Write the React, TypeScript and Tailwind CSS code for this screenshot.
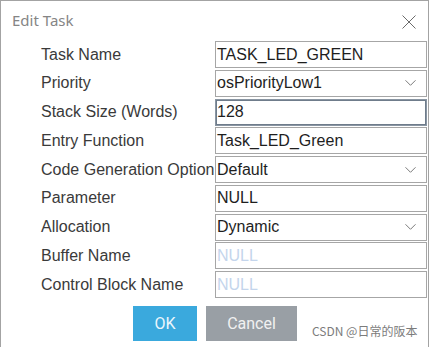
type Row = {
  label: string
  value: string
  select?: boolean
  focused?: boolean
  placeholder?: boolean
}

const rows: Row[] = [
  { label: 'Task Name', value: 'TASK_LED_GREEN' },
  { label: 'Priority', value: 'osPriorityLow1', select: true },
  { label: 'Stack Size (Words)', value: '128', focused: true },
  { label: 'Entry Function', value: 'Task_LED_Green' },
  { label: 'Code Generation Option', value: 'Default', select: true },
  { label: 'Parameter', value: 'NULL' },
  { label: 'Allocation', value: 'Dynamic', select: true },
  { label: 'Buffer Name', value: 'NULL', placeholder: true },
  { label: 'Control Block Name', value: 'NULL', placeholder: true },
]

function Chevron() {
  return (
    <svg width="11" height="7" viewBox="0 0 11 7" className="absolute right-[10px] top-1/2 -translate-y-1/2">
      <polyline points="0.5,0.8 5.5,5.8 10.5,0.8" fill="none" stroke="#7a7a7a" strokeWidth="1" />
    </svg>
  )
}

function Field({ row }: { row: Row }) {
  return (
    <div className="flex h-[27px] items-center">
      <div className="w-[214px] shrink-0 overflow-hidden whitespace-nowrap pl-[40px] text-[16px] leading-none text-[#3a3a3a]">
        {row.label}
      </div>
      <div
        className={`relative flex h-full w-[212px] shrink-0 items-center bg-white pl-[1px] border ${
          row.focused ? 'border-[#8a96a3] shadow-[inset_0_0_0_1px_#6f7c8b]' : 'border-[#a6a6a6]'
        }`}
      >
        <span className={`text-[16px] leading-none ${row.placeholder ? 'text-[#c4d5ec]' : 'text-[#1e1e1e]'}`}>
          {row.value}
        </span>
        {row.select && <Chevron />}
      </div>
    </div>
  )
}

export default function App() {
  return (
    <div className="relative h-[347px] w-[430px] overflow-hidden bg-white" style={{ fontFamily: '"Liberation Sans", Arial, sans-serif' }}>
      <div className="flex h-[360px] w-[429px] flex-col border-l border-r border-t border-[#a3a3a3] bg-white">
        {/* Title bar */}
        <div className="relative flex h-[40px] items-start pl-[11px] pt-[9px]">
          <span className="text-[15px] leading-[20px] text-[#858585]" style={{ fontFamily: '"Noto Sans", sans-serif' }}>
            Edit Task
          </span>
          <svg width="14" height="14" viewBox="0 0 14 14" className="absolute left-[401px] top-[14px]">
            <line x1="0.5" y1="0.5" x2="13.5" y2="13.5" stroke="#6b6b6b" strokeWidth="1" />
            <line x1="13.5" y1="0.5" x2="0.5" y2="13.5" stroke="#6b6b6b" strokeWidth="1" />
          </svg>
        </div>

        {/* Fields */}
        <div className="flex flex-col gap-[1.75px]">
          {rows.map((row) => (
            <Field key={row.label} row={row} />
          ))}
        </div>

        {/* Buttons */}
        <div className="mt-[8px] flex gap-[9px] pl-[132px]" style={{ fontFamily: 'Roboto, sans-serif' }}>
          <button className="h-[35px] w-[64px] bg-[#3aa9dd] text-[16px] text-[#eaf6fc]">OK</button>
          <button className="h-[35px] w-[91px] bg-[#999fa5] text-[16px] text-[#f1f1f1]">Cancel</button>
        </div>
      </div>

      {/* Watermark */}
      <div
        className="absolute left-[312px] top-[324px] whitespace-nowrap text-[12px] leading-[14px] text-[#7c7c7c]"
        style={{ fontFamily: '"Noto Sans CJK SC", sans-serif' }}
      >
        CSDN @日常的阪本
      </div>
    </div>
  )
}
